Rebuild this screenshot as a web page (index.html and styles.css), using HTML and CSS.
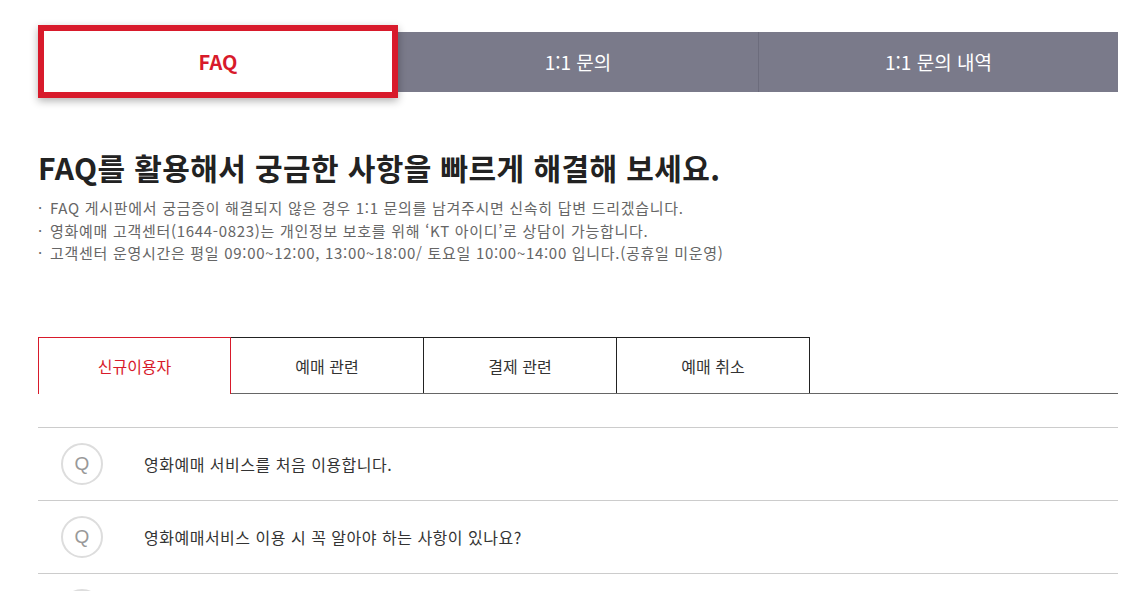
FILE: index.html
```html
<!DOCTYPE html>
<html lang="ko">
<head>
    <meta charset="UTF-8">
    <title>FAQ</title>
    <link rel="stylesheet" href="styles.css">
</head>
<body>
<div class="wrap">
    <!-- 상단 탭 -->
    <ul class="top-tabs">
        <li class="top-tab on">FAQ</li>
        <li class="top-tab">1:1 문의</li>
        <li class="top-tab">1:1 문의 내역</li>
    </ul>

    <h2 class="title">FAQ를 활용해서 궁금한 사항을 빠르게 해결해 보세요.</h2>
    <ul class="notice">
        <li>FAQ 게시판에서 궁금증이 해결되지 않은 경우 1:1 문의를 남겨주시면 신속히 답변 드리겠습니다.</li>
        <li>영화예매 고객센터(1644-0823)는 개인정보 보호를 위해 ‘KT 아이디’로 상담이 가능합니다.</li>
        <li>고객센터 운영시간은 평일 09:00~12:00, 13:00~18:00/ 토요일 10:00~14:00 입니다.(공휴일 미운영)</li>
    </ul>

    <!-- 카테고리 탭 -->
    <ul class="cate-tabs">
        <li class="cate-tab on">신규이용자</li>
        <li class="cate-tab">예매 관련</li>
        <li class="cate-tab">결제 관련</li>
        <li class="cate-tab">예매 취소</li>
    </ul>

    <ul class="faq-list">
        <li class="faq-item">
            <span class="q">Q</span>
            <span class="faq-text">영화예매 서비스를 처음 이용합니다.</span>
        </li>
        <li class="faq-item">
            <span class="q">Q</span>
            <span class="faq-text">영화예매서비스 이용 시 꼭 알아야 하는 사항이 있나요?</span>
        </li>
        <li class="faq-item">
            <span class="q"></span>
        </li>
    </ul>
</div>
</body>
</html>
```

FILE: styles.css
```css
* {
    margin: 0;
    padding: 0;
    box-sizing: border-box;
}

ul {
    list-style: none;
}

html, body {
    height: 591px;
    overflow: hidden;
}

body {
    font-family: 'Noto Sans CJK KR', 'Noto Sans', sans-serif;
    background: #fff;
    color: #333;
}

.wrap {
    width: 1080px;
    margin-left: 38px;
    padding-top: 32px;
}

/* 상단 탭 */
.top-tabs {
    display: flex;
    align-items: center;
    height: 60px;
    background: #7a7a8a;
}

.top-tab {
    width: 360px;
    height: 60px;
    line-height: 60px;
    text-align: center;
    font-size: 19px;
    color: #fff;
}

.top-tab + .top-tab {
    border-left: 1px solid #6c6c7c;
}

.top-tab.on {
    height: 73px;
    margin-top: -7px;
    margin-bottom: -6px;
    line-height: 61px;
    background: #fff;
    border: 6px solid #d81a2b;
    color: #d81a2b;
    font-size: 20px;
    font-weight: 700;
    box-shadow: 0 3px 8px rgba(0,0,0,0.3);
    position: relative;
    z-index: 1;
}

.top-tab.on + .top-tab {
    border-left: 0;
}

/* 안내 문구 */
.title {
    margin-top: 55px;
    font-size: 30px;
    line-height: 40px;
    font-weight: 700;
    color: #222;
    letter-spacing: 0.4px;
}

.notice {
    margin-top: 10px;
}

.notice li {
    font-size: 15px;
    line-height: 22.5px;
    color: #666;
    letter-spacing: 0.7px;
    padding-left: 12px;
    position: relative;
}

.notice li::before {
    content: '·';
    position: absolute;
    left: 0;
    top: 0;
}

/* 카테고리 탭 */
.cate-tabs {
    display: flex;
    align-items: flex-start;
    margin-top: 72px;
    border-bottom: 1px solid #666;
}

.cate-tab {
    width: 193px;
    height: 56px;
    line-height: 56px;
    text-align: center;
    font-size: 16px;
    color: #333;
    border: 1px solid #222;
    border-bottom: 0;
    background: #fff;
}

.cate-tab + .cate-tab {
    margin-left: -1px;
    width: 194px;
}

.cate-tab.on {
    height: 57px;
    margin-bottom: -1px;
    border-color: #d81a2b;
    color: #d81a2b;
    position: relative;
    z-index: 1;
}

/* FAQ 목록 */
.faq-list {
    margin-top: 33px;
}

.faq-item {
    display: flex;
    align-items: center;
    height: 73px;
    border-top: 1px solid #ccc;
    padding-left: 23px;
}

.q {
    width: 42px;
    height: 42px;
    border: 2px solid #ddd;
    border-radius: 50%;
    display: flex;
    align-items: center;
    justify-content: center;
    font-family: 'Liberation Sans', sans-serif;
    font-size: 19px;
    color: #999;
}

.faq-text {
    margin-left: 41px;
    font-size: 16px;
    letter-spacing: 0.5px;
    color: #333;
}
```
